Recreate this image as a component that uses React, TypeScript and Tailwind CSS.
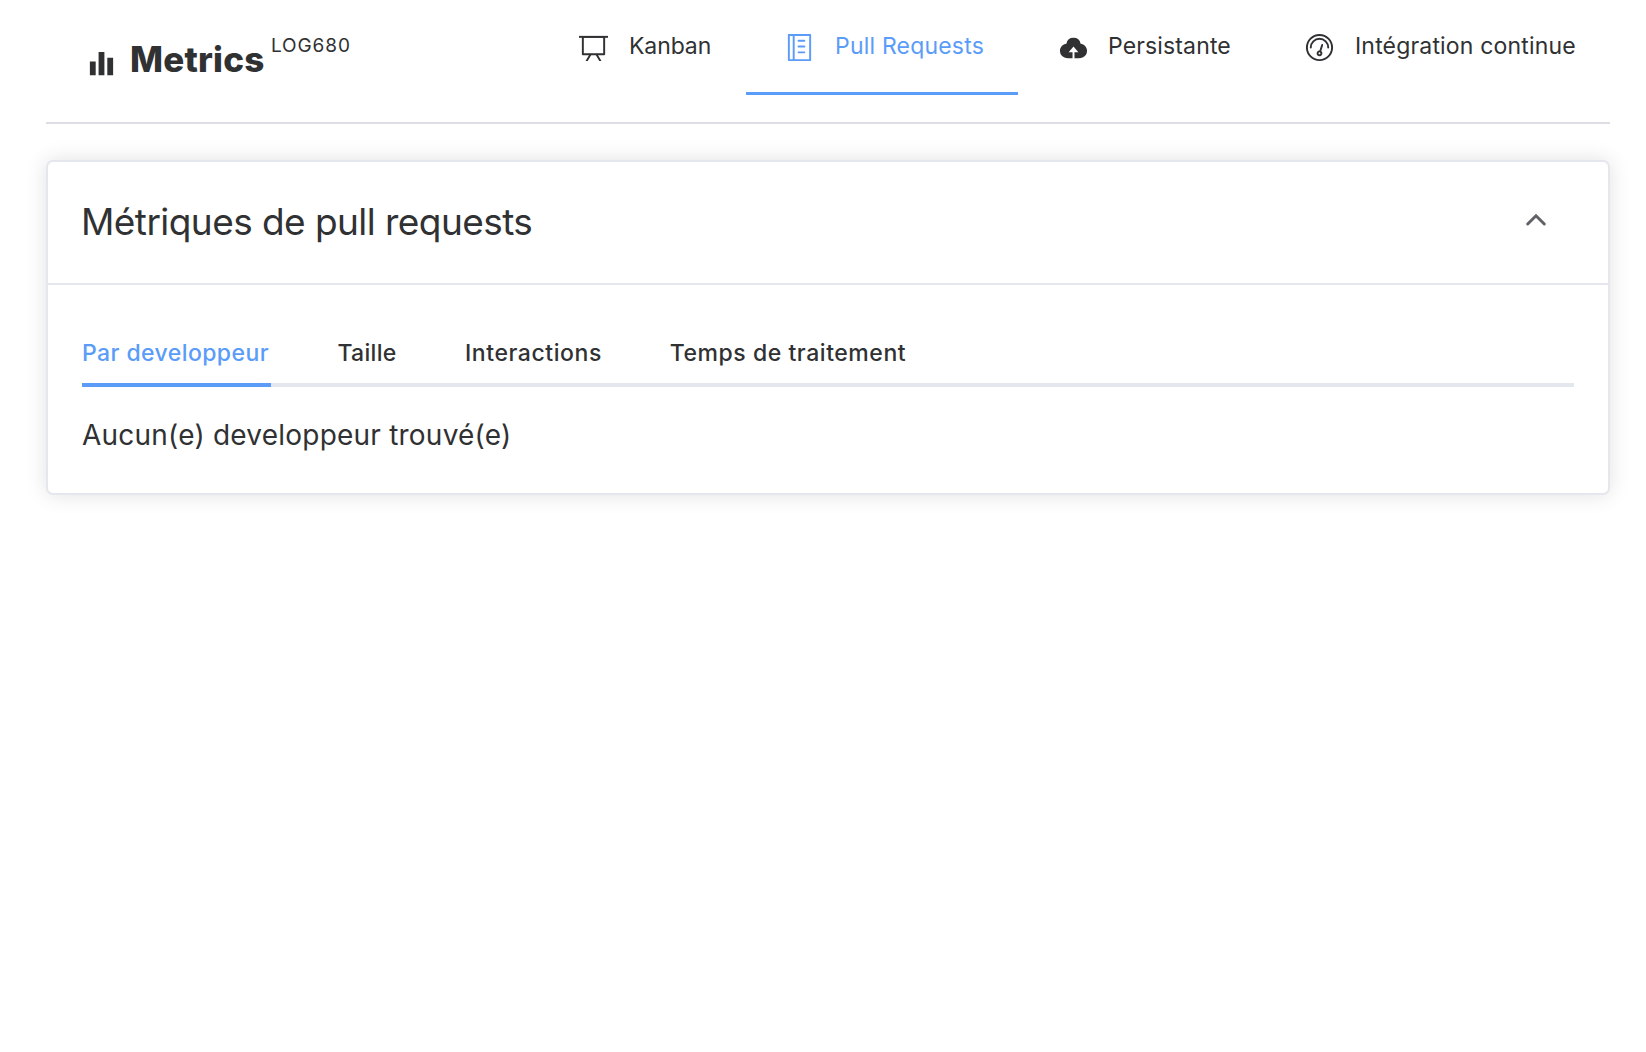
import type { ReactNode } from 'react';

function Icon({ children, className = '' }: { children: ReactNode; className?: string }) {
  return (
    <svg viewBox="0 0 1024 1024" fill="currentColor" className={`h-[31px] w-[31px] shrink-0 ${className}`}>
      {children}
    </svg>
  );
}

const BoardIcon = () => (
  <Icon className="mt-[3px]">
    <path d="M32 128h960v64H32z" />
    <path d="M192 192v512h640V192H192zm-64-64h768v608a32 32 0 0 1-32 32H160a32 32 0 0 1-32-32V128z" />
    <path d="M322.176 960H248.32l144.64-250.56 55.424 32L322.176 960zm453.888 0h-73.856L576 741.44l55.424-32L776.064 960z" />
  </Icon>
);

const MemoIcon = () => (
  <Icon className="mt-[3px]">
    <path d="M480 320h192c21.33 0 32-10.67 32-32s-10.67-32-32-32H480c-21.33 0-32 10.67-32 32s10.67 32 32 32z" />
    <path d="M887.01 72.99C881.01 67 873.34 64 864 64H160c-9.35 0-17.02 3-23.01 8.99C131 78.99 128 86.66 128 96v832c0 9.35 2.99 17.02 8.99 23.01S150.66 960 160 960h704c9.35 0 17.02-2.99 23.01-8.99S896 937.34 896 928V96c0-9.35-3-17.02-8.99-23.01zM192 896V128h96v768h-96zm640 0H352V128h480v768z" />
    <path d="M480 512h192c21.33 0 32-10.67 32-32s-10.67-32-32-32H480c-21.33 0-32 10.67-32 32s10.67 32 32 32zM480 704h192c21.33 0 32-10.67 32-32s-10.67-32-32-32H480c-21.33 0-32 10.67-32 32s10.67 32 32 32z" />
  </Icon>
);

const UploadIcon = () => (
  <Icon className="mt-[3px]">
    <path d="M544 864V672h128L512 480 352 672h128v192H320v-1.6c-5.376.32-10.496 1.6-16 1.6A240 240 0 0 1 64 624c0-123.136 93.12-223.488 212.608-237.248A239.808 239.808 0 0 1 512 192a239.872 239.872 0 0 1 235.456 194.752c119.488 13.76 212.48 114.112 212.48 237.248a240 240 0 0 1-240 240c-5.376 0-10.56-1.28-16-1.6v1.6H544z" />
  </Icon>
);

const OdometerIcon = () => (
  <Icon className="mt-[3px]">
    <path d="M512 896a384 384 0 1 0 0-768 384 384 0 0 0 0 768zm0 64a448 448 0 1 1 0-896 448 448 0 0 1 0 896z" />
    <path d="M192 512a320 320 0 1 1 640 0 32 32 0 1 1-64 0 256 256 0 1 0-512 0 32 32 0 0 1-64 0z" />
    <path d="M570.432 627.84A96 96 0 1 1 509.568 608l60.992-187.776A32 32 0 1 1 631.424 440l-60.992 187.776zM502.08 734.464a32 32 0 1 0 19.84-60.928 32 32 0 0 0-19.84 60.928z" />
  </Icon>
);

const HistogramIcon = () => (
  <Icon>
    <path d="M416 896V128h192v768H416zm-288 0V448h192v448H128zm576 0V320h192v576H704z" />
  </Icon>
);

const menu = [
  { label: 'Kanban', icon: <BoardIcon />, cls: 'w-[206px] pl-[38px] gap-[20px] border-transparent', text: 'tracking-[-0.1px]' },
  { label: 'Pull Requests', icon: <MemoIcon />, cls: 'w-[272px] pl-[38px] gap-[20px] border-[#5a9cf8] text-[#5a9cf8]', text: 'tracking-[0.2px]' },
  { label: 'Persistante', icon: <UploadIcon />, cls: 'w-[246px] pl-[40px] gap-[19px] border-transparent', text: 'tracking-[0.14px]' },
  { label: 'Intégration continue', icon: <OdometerIcon />, cls: 'w-[346px] pl-[40px] gap-[20px] border-transparent', text: 'tracking-[0.18px]' },
];

const tabs = [
  { label: 'Par developpeur', cls: 'w-[255.4px] text-[#5a9cf8]', text: 'tracking-[0.42px]', active: true },
  { label: 'Taille', cls: 'w-[127.6px]', text: 'tracking-[0.33px]' },
  { label: 'Interactions', cls: 'w-[204.8px]', text: 'tracking-[0.57px]' },
  { label: 'Temps de traitement', cls: '', text: 'tracking-[0.55px]' },
];

export default function App() {
  return (
    <div className="min-h-screen bg-white px-[46px] font-['Inter',sans-serif] text-[#303133]">
      <div className="mr-[-10px]">
        <header className="flex h-[124px] w-[1564px] justify-between border-b-2 border-[#dddde3]">
          <div className="flex items-start pl-[40px]">
            <div className="pt-[48px]">
              <HistogramIcon />
            </div>
            <h1 className="ml-[13px] pt-[39px] text-[35px] leading-[40px] font-extrabold tracking-[0.2px]">Metrics</h1>
            <span className="ml-[6.5px] pt-[34px] text-[19px] leading-[24px] tracking-[0.9px]">LOG680</span>
          </div>
          <nav className="flex">
            {menu.map((m) => (
              <a key={m.label} className={`flex h-[95px] items-center border-b-[3px] ${m.cls}`}>
                {m.icon}
                <span className={`whitespace-nowrap text-[23px] leading-[30px] ${m.text}`}>{m.label}</span>
              </a>
            ))}
          </nav>
        </header>

        <section className="mt-[36px] h-[335px] w-[1564px] rounded-[7px] border-2 border-[#e4e7ed] bg-white shadow-[0_0_21px_rgba(0,0,0,0.12)]">
          <div className="flex h-[123px] items-center justify-between border-b-2 border-[#e4e7ed] pr-[60px] pl-[33px]">
            <h2 className="mt-[-2px] text-[37px] leading-[44px] tracking-[-0.56px]">Métriques de pull requests</h2>
            <svg viewBox="0 0 24 24" className="mt-[-3px] h-6 w-6 text-[#606266]" fill="none" stroke="currentColor" strokeWidth="3" strokeLinecap="round">
              <path d="M3.7 15 12 6.8 20.3 15" />
            </svg>
          </div>
          <div className="px-[34px] pt-[37px]">
            <div className="flex h-[65px] border-b-4 border-[#e4e7ed]">
              {tabs.map((t) => (
                <div key={t.label} className={`h-[65px] shrink-0 ${t.cls}`}>
                  <div className="flex h-[61px] items-center">
                    <span className={`whitespace-nowrap text-[23px] leading-[30px] font-medium ${t.text}`}>{t.label}</span>
                  </div>
                  {t.active && <div className="h-1 w-[189px] bg-[#5a9cf8]" />}
                </div>
              ))}
            </div>
            <p className="mt-[31px] text-[28px] leading-[34px] tracking-[0.22px]">Aucun(e) developpeur trouvé(e)</p>
          </div>
        </section>
      </div>
    </div>
  );
}
